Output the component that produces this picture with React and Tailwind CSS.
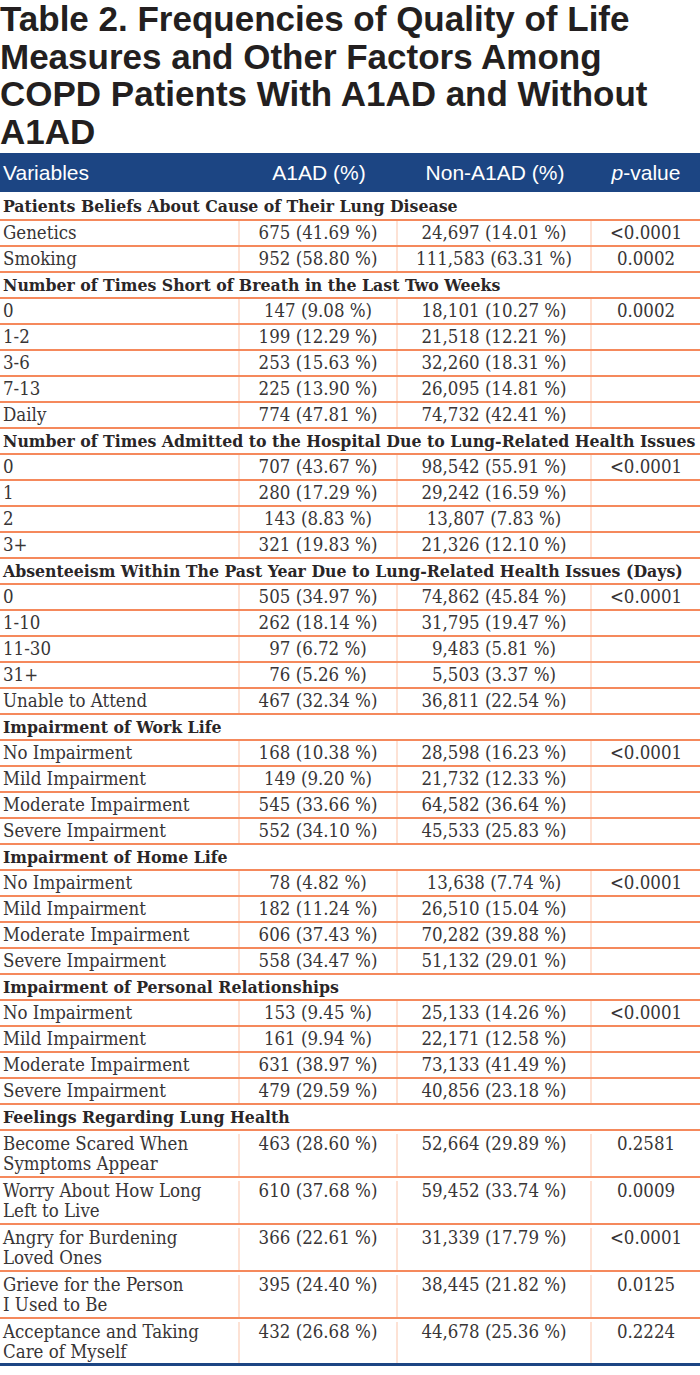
const sections = [
  {
    title: 'Patients Beliefs About Cause of Their Lung Disease',
    rows: [
      ['Genetics', '675 (41.69 %)', '24,697 (14.01 %)', '<0.0001'],
      ['Smoking', '952 (58.80 %)', '111,583 (63.31 %)', '0.0002'],
    ],
  },
  {
    title: 'Number of Times Short of Breath in the Last Two Weeks',
    rows: [
      ['0', '147 (9.08 %)', '18,101 (10.27 %)', '0.0002'],
      ['1-2', '199 (12.29 %)', '21,518 (12.21 %)', ''],
      ['3-6', '253 (15.63 %)', '32,260 (18.31 %)', ''],
      ['7-13', '225 (13.90 %)', '26,095 (14.81 %)', ''],
      ['Daily', '774 (47.81 %)', '74,732 (42.41 %)', ''],
    ],
  },
  {
    title: 'Number of Times Admitted to the Hospital Due to Lung-Related Health Issues',
    rows: [
      ['0', '707 (43.67 %)', '98,542 (55.91 %)', '<0.0001'],
      ['1', '280 (17.29 %)', '29,242 (16.59 %)', ''],
      ['2', '143 (8.83 %)', '13,807 (7.83 %)', ''],
      ['3+', '321 (19.83 %)', '21,326 (12.10 %)', ''],
    ],
  },
  {
    title: 'Absenteeism Within The Past Year Due to Lung-Related Health Issues (Days)',
    rows: [
      ['0', '505 (34.97 %)', '74,862 (45.84 %)', '<0.0001'],
      ['1-10', '262 (18.14 %)', '31,795 (19.47 %)', ''],
      ['11-30', '97 (6.72 %)', '9,483 (5.81 %)', ''],
      ['31+', '76 (5.26 %)', '5,503 (3.37 %)', ''],
      ['Unable to Attend', '467 (32.34 %)', '36,811 (22.54 %)', ''],
    ],
  },
  {
    title: 'Impairment of Work Life',
    rows: [
      ['No Impairment', '168 (10.38 %)', '28,598 (16.23 %)', '<0.0001'],
      ['Mild Impairment', '149 (9.20 %)', '21,732 (12.33 %)', ''],
      ['Moderate Impairment', '545 (33.66 %)', '64,582 (36.64 %)', ''],
      ['Severe Impairment', '552 (34.10 %)', '45,533 (25.83 %)', ''],
    ],
  },
  {
    title: 'Impairment of Home Life',
    rows: [
      ['No Impairment', '78 (4.82 %)', '13,638 (7.74 %)', '<0.0001'],
      ['Mild Impairment', '182 (11.24 %)', '26,510 (15.04 %)', ''],
      ['Moderate Impairment', '606 (37.43 %)', '70,282 (39.88 %)', ''],
      ['Severe Impairment', '558 (34.47 %)', '51,132 (29.01 %)', ''],
    ],
  },
  {
    title: 'Impairment of Personal Relationships',
    rows: [
      ['No Impairment', '153 (9.45 %)', '25,133 (14.26 %)', '<0.0001'],
      ['Mild Impairment', '161 (9.94 %)', '22,171 (12.58 %)', ''],
      ['Moderate Impairment', '631 (38.97 %)', '73,133 (41.49 %)', ''],
      ['Severe Impairment', '479 (29.59 %)', '40,856 (23.18 %)', ''],
    ],
  },
  {
    title: 'Feelings Regarding Lung Health',
    tall: true,
    rows: [
      [['Become Scared When', 'Symptoms Appear'], '463 (28.60 %)', '52,664 (29.89 %)', '0.2581'],
      [['Worry About How Long', 'Left to Live'], '610 (37.68 %)', '59,452 (33.74 %)', '0.0009'],
      [['Angry for Burdening', 'Loved Ones'], '366 (22.61 %)', '31,339 (17.79 %)', '<0.0001'],
      [['Grieve for the Person', 'I Used to Be'], '395 (24.40 %)', '38,445 (21.82 %)', '0.0125'],
      [['Acceptance and Taking', 'Care of Myself'], '432 (26.68 %)', '44,678 (25.36 %)', '0.2224'],
    ],
  },
];

const serif = "font-['DejaVu_Serif_Condensed','DejaVu_Serif',serif] font-stretch-condensed";

const SectionRow = ({ title, first }) => (
  <div
    className={`border-b-2 border-[#f5895c] pl-[3px] font-bold text-[17.5px] text-[#2a2627] whitespace-nowrap ${
      first ? 'h-[29px] leading-[26px] pt-[1px]' : 'h-[26px] leading-[24px]'
    }`}
  >
    {title}
  </div>
);

const DataRow = ({ row, tall, last }) => {
  const [label, a, b, p] = row;
  const h = tall ? 'h-[47px] leading-[20px] pt-[3px]' : 'h-[26px] leading-[24px]';
  const bottom = last ? 'border-b-[3px] border-[#1c4583]' : 'border-b-2 border-[#f5895c]';
  return (
    <div className={`grid grid-cols-[240px_158px_194px_108px] text-[18.5px] text-[#383536] ${h} ${bottom}`}>
      <div className="pl-[3px] border-r-2 border-[#fde2d5] whitespace-nowrap">
        {Array.isArray(label) ? (
          <>
            {label[0]}
            <br />
            {label[1]}
          </>
        ) : (
          label
        )}
      </div>
      <div className="text-center border-r-2 border-[#fde2d5] whitespace-nowrap">{a}</div>
      <div className="text-center border-r-2 border-[#fde2d5] whitespace-nowrap">{b}</div>
      <div className="text-center whitespace-nowrap">{p}</div>
    </div>
  );
};

export default function App() {
  return (
    <div className="w-[700px] h-[1375px] bg-white overflow-hidden">
      <h1 className="font-['Liberation_Sans',Arial,sans-serif] font-bold text-[35px] leading-[37.5px] text-[#231f20] h-[153px] whitespace-nowrap">
        Table 2. Frequencies of Quality of Life
        <br />
        Measures and Other Factors Among
        <br />
        COPD Patients With A1AD and Without
        <br />
        A1AD
      </h1>

      <div className="grid grid-cols-[240px_158px_194px_108px] h-[39px] bg-[#1c4583] text-white font-['Liberation_Sans',Arial,sans-serif] text-[21px] leading-[39px] font-light">
        <div className="pl-[3px]">Variables</div>
        <div className="text-center">A1AD (%)</div>
        <div className="text-center">Non-A1AD (%)</div>
        <div className="text-center">
          <i>p</i>-value
        </div>
      </div>

      <div className={serif}>
        {sections.map((s, si) => (
          <div key={s.title}>
            <SectionRow title={s.title} first={si === 0} />
            {s.rows.map((r, ri) => (
              <DataRow
                key={ri}
                row={r}
                tall={s.tall}
                last={si === sections.length - 1 && ri === s.rows.length - 1}
              />
            ))}
          </div>
        ))}
      </div>
    </div>
  );
}
